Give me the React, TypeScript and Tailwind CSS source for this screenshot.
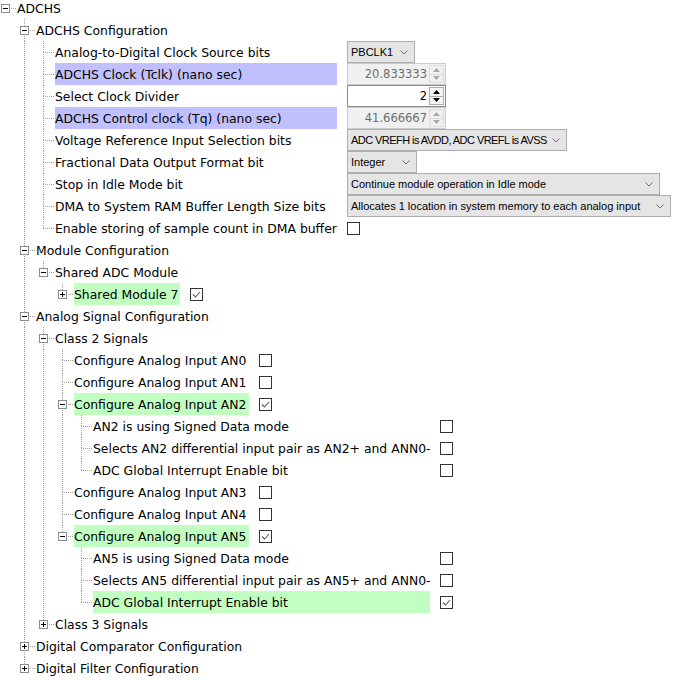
import React from 'react';

type N = {
  label: string;
  hl?: 'blue' | 'green';
  control?: React.ReactNode;
  children?: N[];
  collapsed?: boolean;
  childW?: string;
};

const LINE = '#a0a0a0';

function Gutter({ on }: { on: boolean }) {
  return (
    <svg width="19" height="22" className="block shrink-0">
      {on && <line x1="5.5" y1="0" x2="5.5" y2="22" stroke={LINE} strokeDasharray="1 1" />}
    </svg>
  );
}

function Connector({ top, bottom, toggle }: { top: boolean; bottom: boolean; toggle?: 'plus' | 'minus' }) {
  return (
    <svg width="17" height="22" className="block shrink-0">
      {top && <line x1="5.5" y1="0" x2="5.5" y2="11" stroke={LINE} strokeDasharray="1 1" />}
      {bottom && <line x1="5.5" y1="11" x2="5.5" y2="22" stroke={LINE} strokeDasharray="1 1" />}
      <line x1="5" y1="11.5" x2="16" y2="11.5" stroke={LINE} strokeDasharray="1 1" />
      {toggle && (
        <>
          <rect x="1.5" y="7.5" width="8" height="8" fill="white" stroke="#8c8c8c" />
          <line x1="3" y1="11.5" x2="8" y2="11.5" stroke="#000" />
          {toggle === 'plus' && <line x1="5.5" y1="9" x2="5.5" y2="14" stroke="#000" />}
        </>
      )}
    </svg>
  );
}

function Check({ checked }: { checked?: boolean }) {
  return (
    <svg width="13" height="13" className="block">
      <rect x="0.5" y="0.5" width="12" height="12" fill="white" stroke="#333333" />
      {checked && <path d="M3 6.5 L5.5 9 L10 4" fill="none" stroke="#5a5a5a" strokeWidth="1.1" />}
    </svg>
  );
}

function Chevron() {
  return (
    <svg width="8" height="5" className="ml-[4px] block shrink-0">
      <path d="M0.5 0.5 L4 4 L7.5 0.5" fill="none" stroke="#707070" />
    </svg>
  );
}

function Select({ text, w, tight }: { text: string; w: string; tight?: boolean }) {
  return (
    <div
      className={`flex h-[22px] items-center justify-between overflow-hidden border border-[#adadad] bg-[#e5e5e5] pl-[3px] pr-[6px] font-['Liberation_Sans',sans-serif] text-[11px] text-black ${w}`}
    >
      <span className={`whitespace-nowrap ${tight ? 'tracking-[-0.55px]' : ''}`}>{text}</span>
      <Chevron />
    </div>
  );
}

function Arrow({ up, color }: { up?: boolean; color: string }) {
  return (
    <svg width="7" height="4" className="block">
      {up ? <path d="M0 4 L3.5 0 L7 4 Z" fill={color} /> : <path d="M0 0 L3.5 4 L7 0 Z" fill={color} />}
    </svg>
  );
}

function Spinner({ value, enabled }: { value: string; enabled?: boolean }) {
  const ac = enabled ? '#000000' : '#a8a8a8';
  return (
    <div
      className={`flex h-[22px] w-[99px] border ${
        enabled ? 'border-[#8a8a8a] bg-white text-black' : 'border-[#cccccc] bg-[#f0f0f0] text-[#6d6d6d]'
      }`}
    >
      <div className="flex flex-1 items-center justify-end pr-[2px] pt-[1px] text-[11.5px]">{value}</div>
      <div className="flex w-[16px] flex-col py-[1px] pr-[1px]">
        <div
          className={`flex flex-1 items-center justify-center border ${
            enabled ? 'border-[#adadad] bg-[#f5f5f5]' : 'border-[#dcdcdc] bg-[#f0f0f0]'
          }`}
        >
          <Arrow up color={ac} />
        </div>
        <div
          className={`flex flex-1 items-center justify-center border border-t-0 ${
            enabled ? 'border-[#adadad] bg-[#f5f5f5]' : 'border-[#dcdcdc] bg-[#f0f0f0]'
          }`}
        >
          <Arrow color={ac} />
        </div>
      </div>
    </div>
  );
}

const tree: N = {
  label: 'ADCHS',
  children: [
    {
      label: 'ADCHS Configuration',
      childW: 'w-[282px]',
      children: [
        { label: 'Analog-to-Digital Clock Source bits', control: <Select text="PBCLK1" w="w-[68px]" /> },
        { label: 'ADCHS Clock (Tclk) (nano sec)', hl: 'blue', control: <Spinner value="20.833333" /> },
        { label: 'Select Clock Divider', control: <Spinner value="2" enabled /> },
        { label: 'ADCHS Control clock (Tq) (nano sec)', hl: 'blue', control: <Spinner value="41.666667" /> },
        {
          label: 'Voltage Reference Input Selection bits',
          control: <Select text="ADC VREFH is AVDD, ADC VREFL is AVSS" w="w-[220px]" tight />,
        },
        { label: 'Fractional Data Output Format bit', control: <Select text="Integer" w="w-[70px]" /> },
        {
          label: 'Stop in Idle Mode bit',
          control: <Select text="Continue module operation in Idle mode" w="w-[313px]" />,
        },
        {
          label: 'DMA to System RAM Buffer Length Size bits',
          control: <Select text="Allocates 1 location in system memory to each analog input" w="w-[324px]" />,
        },
        { label: 'Enable storing of sample count in DMA buffer', control: <Check /> },
      ],
    },
    {
      label: 'Module Configuration',
      children: [
        {
          label: 'Shared ADC Module',
          childW: 'w-[106px]',
          children: [{ label: 'Shared Module 7', hl: 'green', collapsed: true, control: <Check checked /> }],
        },
      ],
    },
    {
      label: 'Analog Signal Configuration',
      children: [
        {
          label: 'Class 2 Signals',
          childW: 'w-[175px]',
          children: [
            { label: 'Configure Analog Input AN0', control: <Check /> },
            { label: 'Configure Analog Input AN1', control: <Check /> },
            {
              label: 'Configure Analog Input AN2',
              hl: 'green',
              control: <Check checked />,
              childW: 'w-[337px]',
              children: [
                { label: 'AN2 is using Signed Data mode', control: <Check /> },
                { label: 'Selects AN2 differential input pair as AN2+ and ANN0-', control: <Check /> },
                { label: 'ADC Global Interrupt Enable bit', control: <Check /> },
              ],
            },
            { label: 'Configure Analog Input AN3', control: <Check /> },
            { label: 'Configure Analog Input AN4', control: <Check /> },
            {
              label: 'Configure Analog Input AN5',
              hl: 'green',
              control: <Check checked />,
              childW: 'w-[337px]',
              children: [
                { label: 'AN5 is using Signed Data mode', control: <Check /> },
                { label: 'Selects AN5 differential input pair as AN5+ and ANN0-', control: <Check /> },
                { label: 'ADC Global Interrupt Enable bit', hl: 'green', control: <Check checked /> },
              ],
            },
          ],
        },
        { label: 'Class 3 Signals', collapsed: true },
      ],
    },
    { label: 'Digital Comparator Configuration', collapsed: true },
    { label: 'Digital Filter Configuration', collapsed: true },
  ],
};

function TreeRows({ nodes, level, anc, labelW }: { nodes: N[]; level: number; anc: boolean[]; labelW?: string }) {
  return (
    <>
      {nodes.map((n, i) => {
        const isLast = i === nodes.length - 1;
        const bg = n.hl === 'blue' ? 'bg-[#c0c0ff]' : n.hl === 'green' ? 'bg-[#c0ffc0]' : '';
        return (
          <React.Fragment key={i}>
            <div className="flex h-[22px] items-center">
              {anc.map((a, k) => (
                <Gutter key={k} on={a} />
              ))}
              <Connector
                top={level > 0}
                bottom={level > 0 && !isLast}
                toggle={n.children ? 'minus' : n.collapsed ? 'plus' : undefined}
              />
              <div
                className={`flex h-[22px] shrink-0 items-center whitespace-nowrap pr-[2px] pt-[2px] ${labelW ?? ''} ${bg}`}
              >
                {n.label}
              </div>
              {n.control && <div className="flex h-[22px] items-center pl-[10px]">{n.control}</div>}
            </div>
            {n.children && (
              <TreeRows nodes={n.children} level={level + 1} anc={[...anc, level > 0 && !isLast]} labelW={n.childW} />
            )}
          </React.Fragment>
        );
      })}
    </>
  );
}

export default function App() {
  return (
    <div className="h-[681px] w-[681px] overflow-hidden bg-white font-['DejaVu_Sans',sans-serif] text-[12.4px] text-black">
      <div className="-mt-[3px]">
        <TreeRows nodes={[tree]} level={0} anc={[]} />
      </div>
    </div>
  );
}
